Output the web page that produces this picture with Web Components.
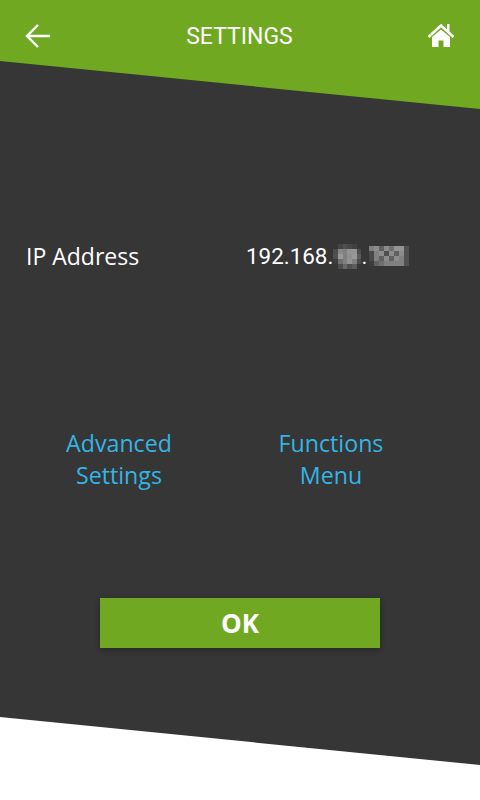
<!DOCTYPE html>
<html><head><meta charset="utf-8"><style>html,body{margin:0;background:#fff}</style></head><body>
<settings-screen></settings-screen>
<script>
class TopBar extends HTMLElement{constructor(){super();this.attachShadow({mode:'open'}).innerHTML=`<style>
:host{display:flex;align-items:center;justify-content:space-between;height:72px;padding:0 24px;color:#fff;font:23px Roboto,sans-serif}
svg{display:block}
</style>
<svg width="28" height="28" viewBox="0 0 28 28" fill="none" stroke="#fff" stroke-width="2.4"><path d="M26 14H3M14 3 3 14l11 11"/></svg>
<span>SETTINGS</span>
<svg style="margin-right:1px" width="28" height="28" viewBox="0 0 28 28" fill="#fff"><path d="M14 7.500 5 15V25h6.500v-6.500h5V25H23V15z"/><path d="M1.500 15 14 3.500 26.500 15" fill="none" stroke="#fff" stroke-width="2.600"/><path d="M20 2h2.500v8H20z"/></svg>`}}
customElements.define('top-bar',TopBar);
class MosaicBlock extends HTMLElement{constructor(){super();const cols=+this.getAttribute('cols'),w=this.getAttribute('w'),vals=this.getAttribute('v').split(' ');
this.attachShadow({mode:'open'}).innerHTML=`<style>:host{display:grid;grid-template-columns:repeat(${cols},${w}px);grid-auto-rows:5px}i{display:block}</style>`+vals.map(v=>`<i style="background:#${v}"></i>`).join('')}}
customElements.define('mosaic-block',MosaicBlock);
class LinkItem extends HTMLElement{constructor(){super();this.attachShadow({mode:'open'}).innerHTML=`<style>:host{display:block;text-align:center;color:#33b5e5;font:23.200px/32px "Open Sans",sans-serif}</style><slot></slot>`}}
customElements.define('link-item',LinkItem);
class OkButton extends HTMLElement{constructor(){super();this.attachShadow({mode:'open'}).innerHTML=`<style>:host{display:flex;align-items:center;justify-content:center;width:280px;height:50px;background:#70a821;color:#fff;font:700 26px "Open Sans",sans-serif;box-shadow:0 2px 6px rgba(0,0,0,.3)}</style><slot></slot>`}}
customElements.define('ok-button',OkButton);
class SettingsScreen extends HTMLElement{constructor(){super();this.attachShadow({mode:'open'}).innerHTML=`<style>
:host{display:block;position:relative;width:480px;height:800px;overflow:hidden;background:linear-gradient(#70a821 0 110px,#fff 110px)}
.panel{position:absolute;inset:0;background:#363636;clip-path:polygon(0 61px,480px 109px,480px 765px,0 717px)}
.content{position:relative;display:flex;flex-direction:column}
.ip{display:grid;grid-template-columns:220px 1fr;padding:167px 0 0 26px;height:34px;align-items:center;color:#fff;font:23px "Open Sans",sans-serif}
.val{display:flex;align-items:center;font:22.400px Roboto,sans-serif;white-space:nowrap}
.links{display:grid;grid-template-columns:238px 186px;padding:154px 0 0 0}
.btn{display:flex;justify-content:center;padding-top:107px}
</style>
<div class="panel"></div>
<div class="content"><top-bar></top-bar>
<div class="ip"><span>IP Address</span><span class="val">192.168.<mosaic-block w="4.700" cols="6" v="363636 444444 505050 484848 404040 363636 4c4c4c 888888 808080 949494 949494 4c4c4c 505050 989898 808080 909090 989898 5c5c5c 3c3c3c 707070 808080 949494 808080 4c4c4c 363636 4c4c4c 686868 505050 5c5c5c 363636"></mosaic-block>.<mosaic-block style="margin-left:1.500px" w="5" cols="8" v="808080 8c8c8c 606060 8c8c8c 707070 949494 949494 505050 484848 808080 8c8c8c 505050 8c8c8c 606060 8c8c8c 505050 484848 808080 606060 8c8c8c 606060 8c8c8c 808080 505050 3c3c3c 606060 707070 808080 808080 808080 808080 505050"></mosaic-block></span></div>
<div class="links"><link-item>Advanced<br>Settings</link-item><link-item>Functions<br>Menu</link-item></div>
<div class="btn"><ok-button>OK</ok-button></div>
</div>`}}
customElements.define('settings-screen',SettingsScreen);
</script></body></html>
